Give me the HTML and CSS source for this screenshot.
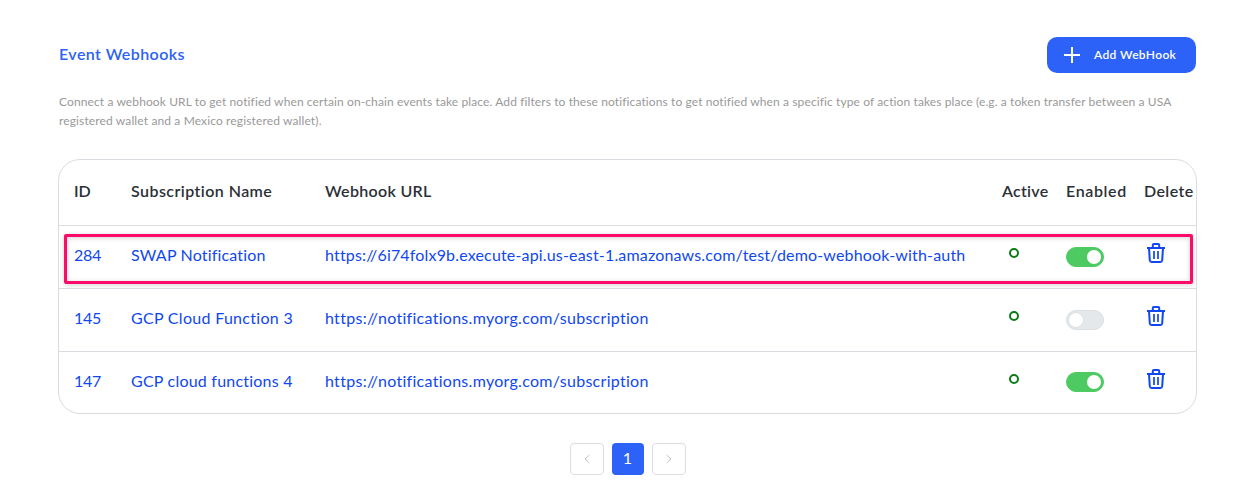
FILE: index.html
```html
<!DOCTYPE html>
<html lang="en">
<head>
<meta charset="utf-8">
<title>Event Webhooks</title>
<link rel="stylesheet" href="styles.css">
</head>
<body>
<svg class="defs" width="0" height="0">
  <symbol id="trash" viewBox="0 0 18 20">
    <path d="M0 5H18M5.8 4.5V2Q5.8 1 6.8 1H11.2Q12.2 1 12.2 2V4.5M2 5L2.8 17.4Q3 19 4.6 19H13.4Q15 19 15.2 17.4L16 5" fill="none" stroke="currentColor" stroke-width="2"/>
    <path d="M7 8V16M11 8V16" fill="none" stroke="currentColor" stroke-width="1.7"/>
  </symbol>
</svg>
<main class="page">
  <header class="header">
    <h1 class="title"><span class="t-title">Event Webhooks</span></h1>
    <button class="add"><svg class="plus" viewBox="0 0 16 16"><path d="M8 0V16M0 8H16" stroke="currentColor" stroke-width="2"/></svg><span class="t-add">Add WebHook</span></button>
  </header>
  <p class="intro"><span class="t-intro1">Connect a webhook URL to get notified when certain on-chain events take place. Add filters to these notifications to get notified when a specific type of action takes place (e.g. a token transfer between a USA</span><br><span class="t-intro2">registered wallet and a Mexico registered wallet).</span></p>
  <section class="table">
    <div class="row head"><span>ID</span><span class="t-sub">Subscription Name</span><span class="t-hurl">Webhook URL</span><span class="t-act">Active</span><span class="t-en">Enabled</span><span class="t-del">Delete</span></div>
    <div class="row body marked"><span class="num">284</span><span class="t-swap">SWAP Notification</span><span class="t-long">https://6i74folx9b.execute-api.us-east-1.amazonaws.com/test/demo-webhook-with-auth</span><i class="status"></i><i class="toggle on"></i><svg class="trash"><use href="#trash"/></svg></div>
    <div class="row body"><span class="num">145</span><span class="t-gcp3">GCP Cloud Function 3</span><span class="t-url">https://notifications.myorg.com/subscription</span><i class="status"></i><i class="toggle"></i><svg class="trash"><use href="#trash"/></svg></div>
    <div class="row body last"><span class="num">147</span><span class="t-gcp4">GCP cloud functions 4</span><span class="t-url">https://notifications.myorg.com/subscription</span><i class="status"></i><i class="toggle on"></i><svg class="trash"><use href="#trash"/></svg></div>
  </section>
  <nav class="pager">
    <button class="page-btn"><svg viewBox="0 0 6 10"><path d="M5.3 1L1 5L5.3 9"/></svg></button>
    <button class="page-btn current">1</button>
    <button class="page-btn"><svg viewBox="0 0 6 10"><path d="M.7 1L5 5L.7 9"/></svg></button>
  </nav>
</main>
</body>
</html>
```
FILE: styles.css
```css
*, *::before, *::after { box-sizing: border-box; }
body { margin: 0; background: #fff; font-family: Lato, "Liberation Sans", sans-serif; font-variant-ligatures: none; }
.defs { display: block; }
.page { padding: 37px 54px 0 58px; white-space: nowrap; }
.header { display: flex; justify-content: space-between; height: 36px; padding: 0 1px; }
.title { margin: 0; font-size: 16px; line-height: 34px; font-weight: 600; color: #2c62f6; }
.add { display: flex; align-items: center; gap: 14px; width: 149px; height: 36px; padding: 0 0 0 17px; border: 0; border-radius: 10px; background: #2c62f8; color: #fff; font: 600 12px/36px Lato, sans-serif; }
.plus { width: 16px; height: 16px; }
.intro { margin: 19px 1px 0; font-size: 12px; line-height: 19px; color: #999; }
.table { margin-top: 29px; height: 255px; border: 1px solid #d9dde1; border-radius: 22px; }
.row { display: grid; grid-template-columns: 57px 194px 677px 64px 78px 50px; padding-left: 15px; font-size: 16px; }
.head { height: 66px; line-height: 62px; border-bottom: 1px solid #d9dde1; color: #2b3036; font-weight: 600; }
.body { height: 63px; line-height: 58px; border-bottom: 1px solid #d9dde1; color: #1047f0; }
.last { border-bottom: 0; }
.marked { position: relative; }
.marked::after { content: ""; position: absolute; left: 5px; right: 3px; top: 8px; height: 50px; border: 3px solid #ff0a68; border-radius: 2px; box-shadow: 0 1px 5px rgba(0,0,0,.18), inset 0 1px 5px rgba(0,0,0,.18); }
.status { width: 10px; height: 10px; margin: 22px 0 0 7px; border: 2px solid #0c7a18; border-radius: 50%; }
.toggle { display: flex; width: 38px; height: 20px; margin-top: 21px; padding: 2px; border: 1px solid #dadfe3; border-radius: 10px; background: #e4e8eb; }
.toggle::before { content: ""; width: 14px; height: 14px; border-radius: 50%; background: #fff; box-shadow: 0 0 1px #c6ccd0; }
.toggle.on { background: #4dcb62; border-color: #4dcb62; justify-content: flex-end; }
.toggle.on::before { box-shadow: none; }
.last .toggle { margin-top: 20px; }
.trash { width: 18px; height: 20px; margin: 17px 0 0 3px; }
.pager { display: flex; justify-content: center; gap: 8px; margin-top: 29px; padding-left: 1px; }
.page-btn { display: flex; align-items: center; justify-content: center; width: 34px; height: 32px; padding: 0; border: 1px solid #dcdee1; border-radius: 4px; background: #fff; }
.page-btn svg { width: 6px; height: 10px; fill: none; stroke: #c0c3c7; }
.page-btn.current { width: 32px; padding: 0 1px 2px 0; border: 0; background: #2c62f8; color: #fff; font: 16px/30px Lato, sans-serif; }
.t-title { letter-spacing: .43px; }
.t-add { letter-spacing: .36px; }
.t-intro1 { letter-spacing: .11px; }
.t-intro2 { letter-spacing: .13px; }
.t-sub { letter-spacing: .44px; }
.t-hurl { letter-spacing: .32px; }
.t-act { letter-spacing: .25px; }
.t-en { letter-spacing: .62px; }
.t-del { letter-spacing: .4px; }
.num { letter-spacing: -.3px; }
.t-swap { letter-spacing: .18px; }
.t-long { letter-spacing: .17px; }
.t-gcp3 { letter-spacing: .3px; }
.t-gcp4 { letter-spacing: .22px; }
.t-url { letter-spacing: .29px; }
```
